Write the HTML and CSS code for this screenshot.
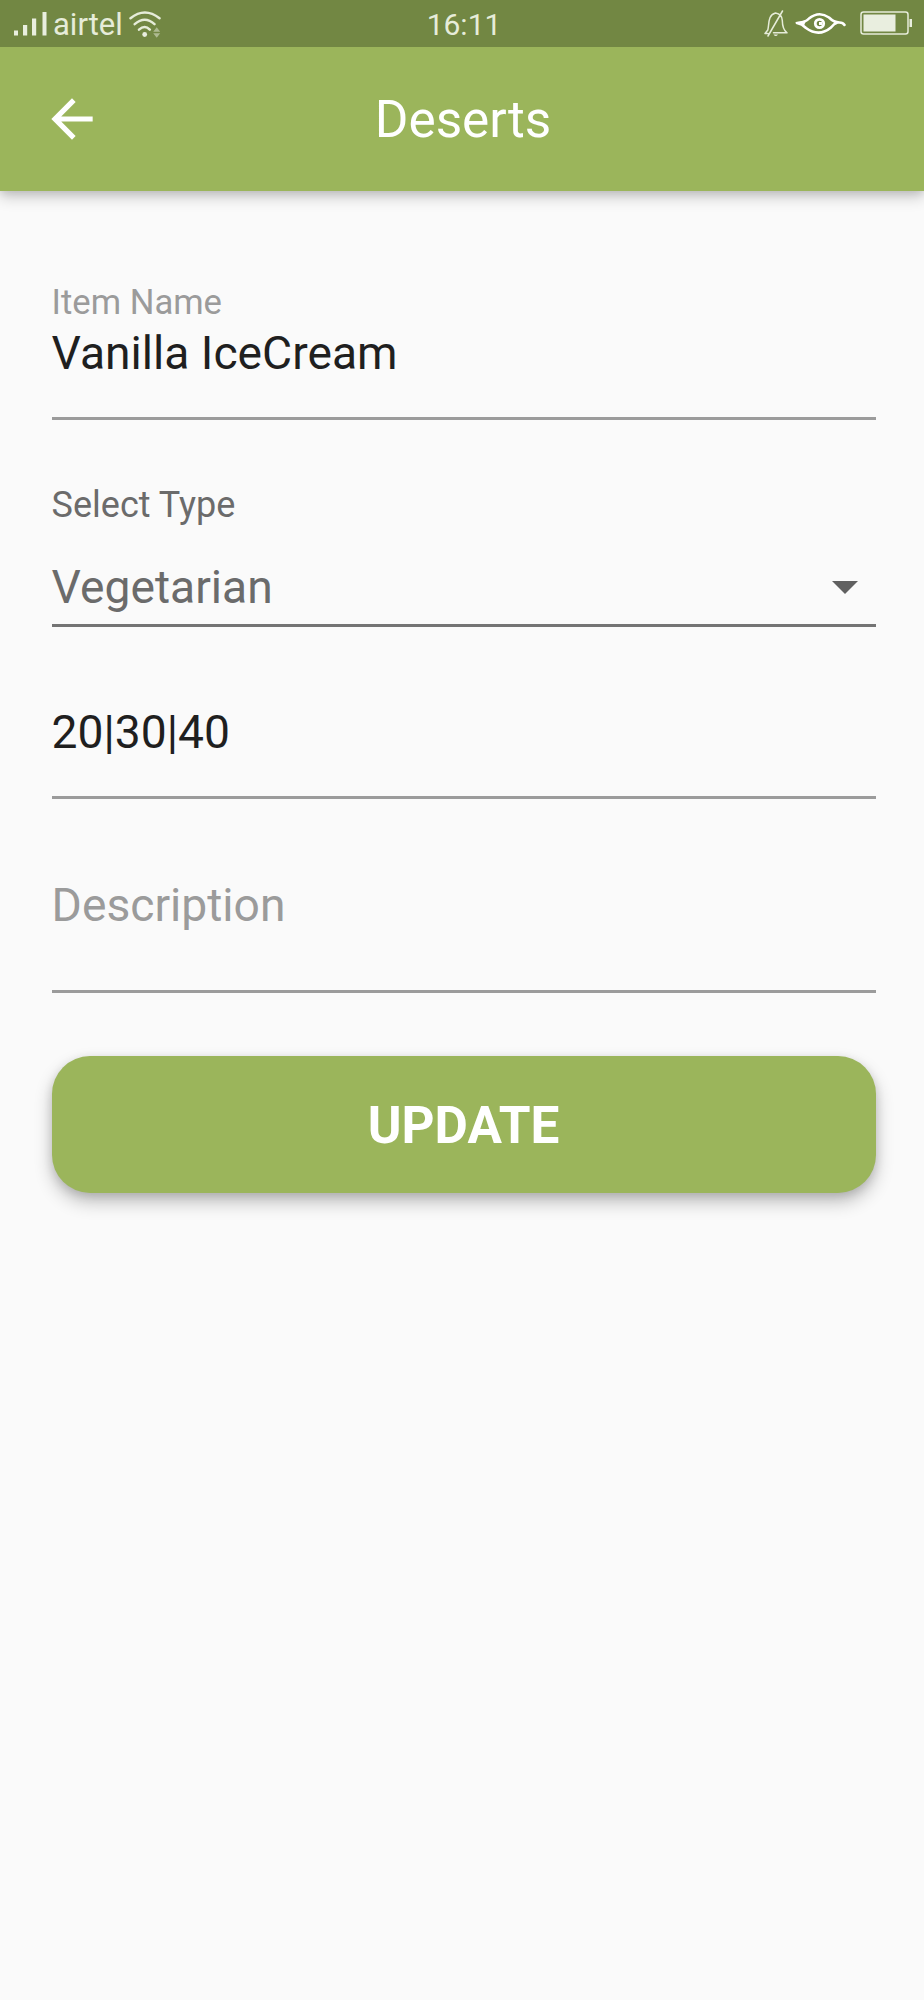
FILE: index.html
```html
<!DOCTYPE html>
<html lang="en">
<head>
<meta charset="utf-8">
<title>Deserts</title>
<link rel="stylesheet" href="styles.css">
</head>
<body>
<header class="top">
  <div class="status">
    <div class="status-left">
      <svg class="signal" width="33" height="24" viewBox="0 0 33 24"><path d="M0 18.500h4V23.500H0zM9 13h4.200v10.500H9zM18 6.500h4.200v17H18zM28.500 0h4v23.500h-4z"/></svg>
      <span class="carrier">airtel</span>
      <svg class="wifi" width="33" height="27" viewBox="0 0 33 27"><g fill="none" stroke-width="2.500" stroke-linecap="round"><path d="M1.500 7.300Q15.800-4.300 30.500 7.300M5.700 13.100Q15.800 4.300 25.500 13.100M10 18.600Q15.800 13.500 20.800 18.600"/></g><circle cx="15.700" cy="23.500" r="2.400"/><path class="dim" d="M24.200 20.800 27.700 16.300 31.200 20.800zM24.200 22.200 27.700 26.700 31.200 22.200z"/></svg>
    </div>
    <span class="time">16:11</span>
    <div class="status-right">
      <svg class="bell" width="26" height="28" viewBox="0 0 26 28"><g fill="none" stroke-width="1.500" stroke-linecap="round" stroke-linejoin="round"><path d="M4.800 20C6.300 15 4.500 5 12.500 3Q19 4 19.300 10.500C19.400 17 20.500 20.200 24 22.800H10.500M4.800 20 2 23.500H5M19.500 1 5 26"/></g><path d="M10.500 24.500h4.500q-2.200 3-4.500 0z"/></svg>
      <svg class="eye" width="53" height="24" viewBox="0 0 53 24"><path fill="none" stroke-width="2.600" stroke-linecap="round" stroke-linejoin="round" d="M3 11Q11 11 15 6.500Q25-1.500 35 5.500Q40 10.500 45.500 10.500Q49 10.500 50.500 13M3 11Q8 12 12 16Q25 25.500 37 15.500Q40 11.500 43.500 10.500"/><path d="M1 10.500 12 8 10 14z"/><circle cx="25.500" cy="11.500" r="4.200" fill="none" stroke-width="2.800"/><path d="M25 10h3v3h-3z"/></svg>
      <svg class="battery" width="53" height="24" viewBox="0 0 53 24"><rect x="1" y="1" width="47" height="22" rx="2.500" fill="none" stroke-width="1.500"/><path d="M3.500 3.500h32v17h-32zM49.500 8H52v8h-2.500z"/></svg>
    </div>
  </div>
  <div class="appbar">
    <svg class="back" width="62" height="62" viewBox="0 0 24 24"><path d="M20 11H7.830l5.590-5.590L12 4l-8 8 8 8 1.410-1.410L7.830 13H20v-2z"/></svg>
    <h1 class="title">Deserts</h1>
  </div>
</header>
<main class="form">
  <div class="field name-field">
    <label class="label">Item Name</label>
    <div class="value">Vanilla IceCream</div>
  </div>
  <div class="caption">Select Type</div>
  <div class="select">
    <span class="selected">Vegetarian</span>
    <svg class="caret" width="26" height="13" viewBox="0 0 26 13"><path d="M0 0h26L13 13z"/></svg>
  </div>
  <div class="field price-field">
    <div class="value price">20|30|40</div>
  </div>
  <div class="field description-field">
    <div class="value placeholder">Description</div>
  </div>
  <button class="update">UPDATE</button>
</main>
</body>
</html>
```
FILE: styles.css
```css
* { box-sizing: border-box; }
body {
  margin: 0;
  min-height: 2000px;
  background: #fafafa;
  color: #1f1f1f;
  font-family: Roboto, sans-serif;
}
svg { display: block; flex: none; }
.top {
  height: 191px;
  background: #9bb55b;
  box-shadow: 0 6px 14px rgba(0, 0, 0, .2), 0 2px 8px rgba(0, 0, 0, .1);
}
.status {
  display: grid;
  grid-template-columns: 1fr auto 1fr;
  height: 46.500px;
  background: #728743;
  color: #e6ecd9;
  fill: #e9eedf;
}
.status-left { display: flex; align-items: flex-start; padding-left: 14px; }
.signal { margin-top: 12px; }
.carrier { margin: 6.500px 0 0 6px; font-size: 31px; line-height: 36px; }
.wifi { margin: 11px 0 0 6px; }
.wifi g, .bell g, .battery rect { stroke: #e6ecd9; }
.dim { opacity: .5; }
.time { margin: 7px -2px 0 2px; font-size: 30px; line-height: 36px; }
.status-right { display: flex; align-items: flex-start; justify-content: flex-end; padding-right: 11px; }
.bell { margin-top: 10px; }
.eye { margin: 12px 13px 0 5px; fill: #fff; }
.eye path[fill], .eye circle { stroke: #fff; }
.battery { margin-top: 11px; }
.appbar {
  display: grid;
  grid-template-columns: 62px 1fr 62px;
  align-items: center;
  height: 145px;
  padding: 0 41px;
}
.back { fill: #fff; }
.title { margin: 1px -1px 0 1px; text-align: center; font-size: 51.3px; font-weight: 400; line-height: 60px; color: #fff; }
.form { padding: 91px 48.400px 0 51.600px; }
.field { border-bottom: 3px solid #9b9b9b; }
.label { display: block; margin-bottom: 4px; font-size: 34.65px; line-height: 40px; color: #9b9b9b; }
.value, .selected { font-size: 46.2px; line-height: 54px; }
.name-field { height: 138px; }
.caption { margin-top: 64px; font-size: 36px; line-height: 42px; color: #6b6b6b; }
.select {
  display: flex;
  align-items: center;
  justify-content: space-between;
  height: 67px;
  margin-top: 34px;
  padding: 0 18px 10px 0;
  border-bottom: 3px solid #747474;
  color: #6b6b6b;
}
.caret { fill: #606060; }
.price-field { height: 94px; margin-top: 78px; }
.description-field { height: 115px; margin-top: 79px; }
.placeholder { color: #9b9b9b; }
.update {
  display: block;
  width: 824px;
  height: 137px;
  margin-top: 63px;
  padding: 3px 0 0;
  border: 0;
  border-radius: 38px;
  background: #9bb55b;
  box-shadow: 0 9px 18px rgba(0, 0, 0, .24), 0 3px 10px rgba(0, 0, 0, .12);
  color: #fff;
  font: 700 51.3px/60px Roboto, sans-serif;
}
```
